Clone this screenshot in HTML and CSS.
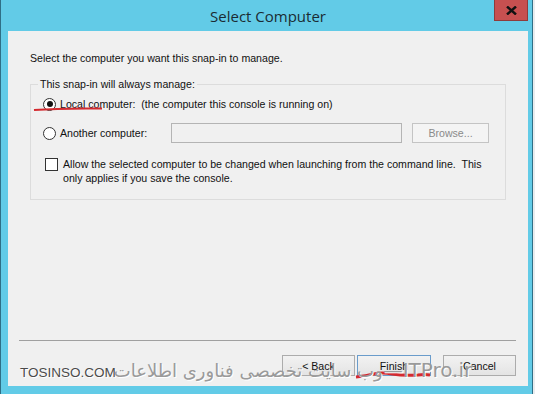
FILE: index.html
```html
<!DOCTYPE html>
<html>
<head>
<meta charset="utf-8">
<link rel="stylesheet" href="styles.css">
</head>
<body>
<div class="window">
  <div class="titlebar">
    <div class="title">Select Computer</div>
    <div class="close"><svg width="11" height="9" viewBox="0 0 11 9"><path d="M1 0.5 L10 8.5 M10 0.5 L1 8.5" stroke="#111" stroke-width="2.4"/></svg></div>
  </div>
  <div class="content">
    <p class="intro">Select the computer you want this snap-in to manage.</p>
    <fieldset class="group">
      <legend>This snap-in will always manage:</legend>
      <div class="row row-local">
        <span class="radio checked"></span>
        <span class="label">Local computer:&nbsp; (the computer this console is running on)</span>
      </div>
      <div class="row row-another">
        <span class="radio"></span>
        <span class="label label-another">Another computer:</span>
        <span class="textbox"></span>
        <span class="btn btn-browse">Browse...</span>
      </div>
      <div class="row row-check">
        <span class="checkbox"></span>
        <span class="label">Allow the selected computer to be changed when launching from the command line.&nbsp; This<br>only applies if you save the console.</span>
      </div>
    </fieldset>
    <div class="spacer"></div>
    <div class="separator"></div>
    <div class="buttons">
      <span class="btn btn-back">&lt; Back</span>
      <span class="btn btn-finish">Finish</span>
      <span class="btn btn-cancel">Cancel</span>
    </div>
  </div>
  <svg class="marks" width="535" height="394" viewBox="0 0 535 394">
    <path d="M34 110 Q60 108 102 108.5" stroke="#d42a2f" stroke-width="2" fill="none"/>
    <path d="M356 377 Q366 376 374 374 Q382 372 392 374 Q404 376 418 375 Q425 374 430 375" stroke="#d42a2f" stroke-width="3" fill="none"/>
  </svg>
  <div class="watermark">
    <span class="wm-left">TOSINSO.COM</span>
    <span class="wm-right"><span dir="rtl" class="wm-fa">وب سایت تخصصی فناوری اطلاعات</span>—ITPro.ir</span>
  </div>
</div>
</body>
</html>
```

FILE: styles.css
```css
* { box-sizing: border-box; }
html, body { margin: 0; padding: 0; }
body {
  width: 535px;
  height: 394px;
  background: #e9ecee;
  overflow: hidden;
  font-family: "Liberation Sans", Arial, sans-serif;
  font-size: 10.6px;
  color: #000;
}
.window {
  position: relative;
  width: 533px;
  height: 394px;
  background: #62cbe7;
  border-left: 1px solid #2f6f86;
  border-right: 1px solid #2f6f86;
  display: flex;
  flex-direction: column;
  padding: 0 4px 8px 7px;
}
.titlebar {
  height: 31px;
  display: grid;
  grid-template-columns: 1fr auto 1fr;
  flex-shrink: 0;
}
.title {
  grid-column: 2;
  font-family: "Open Sans", "Noto Sans", sans-serif;
  font-size: 15px;
  color: #1b2b33;
  line-height: 31px;
  padding-top: 1px;
}
.close {
  grid-column: 3;
  justify-self: end;
  width: 34px;
  height: 21px;
  background: #c75050;
  border: 1px solid #8f3b3b;
  border-top: none;
  display: flex;
  align-items: center;
  justify-content: center;
}
.content {
  flex: 1;
  background: #f0f0f0;
  display: flex;
  flex-direction: column;
  padding: 0 0 10px 0;
}
.intro {
  margin: 21px 22px 0 22px;
  line-height: 13px;
  color: #111;
}
.group {
  margin: 13px 22px 0 22px;
  border: 1px solid #dcdcdc;
  border-radius: 0;
  padding: 6px 10px 0 12px;
  height: 122px;
  min-width: 0;
}
.group legend {
  padding: 0 2px;
  margin-left: -5px;
  line-height: 13px;
  color: #111;
}
.row {
  display: flex;
  align-items: center;
}
.row-local { height: 14px; }
.row-another { height: 20px; margin-top: 12px; }
.row-check { align-items: flex-start; margin-top: 14px; }
.radio {
  width: 13px;
  height: 13px;
  border-radius: 50%;
  border: 1px solid #333;
  background: #fff;
  flex-shrink: 0;
  display: flex;
  align-items: center;
  justify-content: center;
}
.radio.checked::after {
  content: "";
  width: 6px;
  height: 6px;
  border-radius: 50%;
  background: #111;
}
.label {
  margin-left: 4px;
  line-height: 14px;
  color: #111;
  white-space: nowrap;
}
.label-another { width: 111px; }
.textbox {
  width: 231px;
  height: 20px;
  border: 1px solid #b4b4b4;
  background: #f0f0f0;
  flex-shrink: 0;
}
.btn {
  display: flex;
  align-items: center;
  justify-content: center;
  height: 21px;
  border: 1px solid #acacac;
  background: linear-gradient(#f2f2f2, #e4e4e4);
  color: #111;
  flex-shrink: 0;
}
.btn-browse {
  margin-left: 10px;
  width: 77px;
  height: 20px;
  background: #f4f4f4;
  border-color: #c4c4c4;
  color: #8a8a8a;
}
.checkbox {
  width: 13px;
  height: 13px;
  border: 1px solid #333;
  background: #fff;
  margin-left: 2px;
  margin-top: 1px;
  flex-shrink: 0;
}
.row-check .label { margin-left: 5px; }
.spacer { flex: 1; }
.separator {
  height: 1px;
  background: #a0a0a0;
  margin: 0 12px 0 11px;
}
.buttons {
  display: flex;
  justify-content: flex-end;
  margin: 14px 12px 0 0;
}
.btn-back { width: 73px; }
.btn-finish { width: 74px; margin-left: 2px; border-color: #6a9ccb; }
.btn-cancel { width: 73px; margin-left: 12px; }
.marks {
  position: absolute;
  left: -1px;
  top: 0;
  pointer-events: none;
}
.watermark {
  position: absolute;
  left: 19px;
  top: 358px;
  display: flex;
  align-items: baseline;
  white-space: nowrap;
}
.wm-left {
  font-family: "Liberation Sans", Arial, sans-serif;
  font-size: 13.5px;
  color: #4a4a4a;
  text-shadow: 0 0 1px #fff, 1px 1px 0 #fff;
}
.wm-right {
  font-family: "DejaVu Sans", sans-serif;
  font-size: 20px;
  color: #9a9a9a;
  text-shadow: 1px 1px 0 #fff;
  margin-left: -2px;
}
.wm-fa {
  font-size: 18px;
  letter-spacing: 0.5px;
}
```
